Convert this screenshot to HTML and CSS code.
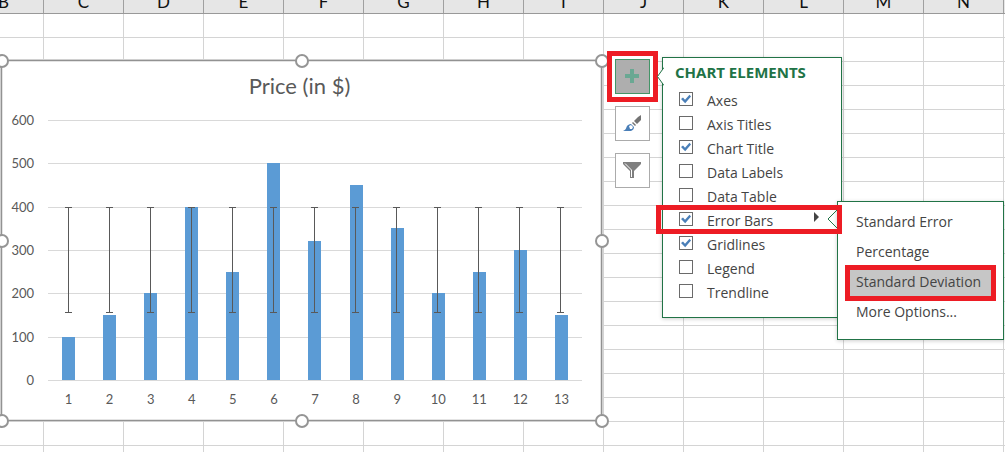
FILE: index.html
```html
<!DOCTYPE html>
<html lang="en">
<head>
<meta charset="utf-8">
<title>Price chart</title>
<link rel="stylesheet" href="styles.css">
</head>
<body>
<main class="sheet">
  <div class="columns">
    <span>B</span><span>C</span><span>D</span><span>E</span><span>F</span><span>G</span><span>H</span><span>I</span><span>J</span><span>K</span><span>L</span><span>M</span><span>N</span><span></span>
  </div>
  <div class="cells"></div>

  <section class="chart" aria-label="Price chart">
    <h1 class="chart-title">Price (in $)</h1>
    <div class="chart-body">
      <div class="y-axis"><span>600</span><span>500</span><span>400</span><span>300</span><span>200</span><span>100</span><span>0</span></div>
      <div class="plot">
        <div class="gridlines"><i></i><i></i><i></i><i></i><i></i><i></i><i></i></div>
        <div class="bars">
          <div class="slot"><div class="bar" style="height:16.67%"></div></div>
          <div class="slot"><div class="bar" style="height:25%"></div></div>
          <div class="slot"><div class="bar" style="height:33.33%"></div></div>
          <div class="slot"><div class="bar" style="height:66.67%"></div></div>
          <div class="slot"><div class="bar" style="height:41.67%"></div></div>
          <div class="slot"><div class="bar" style="height:83.33%"></div></div>
          <div class="slot"><div class="bar" style="height:53.33%"></div></div>
          <div class="slot"><div class="bar" style="height:75%"></div></div>
          <div class="slot"><div class="bar" style="height:58.33%"></div></div>
          <div class="slot"><div class="bar" style="height:33.33%"></div></div>
          <div class="slot"><div class="bar" style="height:41.67%"></div></div>
          <div class="slot"><div class="bar" style="height:50%"></div></div>
          <div class="slot"><div class="bar" style="height:25%"></div></div>
        </div>
      </div>
      <div class="x-axis"><span>1</span><span>2</span><span>3</span><span>4</span><span>5</span><span>6</span><span>7</span><span>8</span><span>9</span><span>10</span><span>11</span><span>12</span><span>13</span></div>
    </div>
    <i class="handle top left"></i><i class="handle top center"></i><i class="handle top right"></i>
    <i class="handle middle left"></i><i class="handle middle right"></i>
    <i class="handle bottom left"></i><i class="handle bottom center"></i><i class="handle bottom right"></i>
  </section>

  <div class="tools">
    <button class="tool active" type="button" aria-label="Chart elements">
      <svg width="19" height="19" viewBox="0 0 19 19"><path d="M7 2h4v5h5v4h-5v5H7v-5H2V7h5z" fill="#6aa893"/></svg>
    </button>
    <button class="tool" type="button" aria-label="Chart styles">
      <svg width="19" height="19" viewBox="0 0 19 19"><path d="M18 1v5l-4 4-3-3 4-4z" fill="#737373"/><path d="M10 8l3 3-1 1-3-3z" fill="#737373"/><path d="M0 17c3-1 3-3 4-5 1-1 2-2 4-2l3 3c0 2-1 3-3 4z" fill="#4a7fb8"/><path d="M6 12l2-1 2 2-1 2-2 0z" fill="#fff"/></svg>
    </button>
    <button class="tool" type="button" aria-label="Chart filters">
      <svg width="19" height="19" viewBox="0 0 19 19"><path d="M0 1h18v2l-7 7v7H7v-7L0 3z" fill="#7f7f7f"/><path d="M2 2.500L8.500 9v7" fill="none" stroke="#fff"/></svg>
    </button>
  </div>

  <section class="panel" aria-label="Chart elements">
    <svg class="notch" width="7" height="20" viewBox="0 0 7 20"><path d="M7 .5L.5 9.500 7 18.500" fill="#fff" stroke="#217346"/></svg>
    <h2>CHART ELEMENTS</h2>
    <label class="option"><input type="checkbox" checked><span>Axes</span></label>
    <label class="option"><input type="checkbox"><span>Axis Titles</span></label>
    <label class="option"><input type="checkbox" checked><span>Chart Title</span></label>
    <label class="option"><input type="checkbox"><span>Data Labels</span></label>
    <label class="option"><input type="checkbox"><span>Data Table</span></label>
    <label class="option marked"><input type="checkbox" checked><span>Error Bars</span>
      <svg class="more" width="24" height="20" viewBox="0 0 24 20"><path d="M1 3l5 5-5 5z" fill="#444"/><path d="M24 1l-9 9 9 9" fill="none" stroke="#217346"/></svg>
    </label>
    <label class="option"><input type="checkbox" checked><span>Gridlines</span></label>
    <label class="option"><input type="checkbox"><span>Legend</span></label>
    <label class="option"><input type="checkbox"><span>Trendline</span></label>
  </section>

  <nav class="submenu" aria-label="Error bars">
    <button type="button">Standard Error</button>
    <button type="button">Percentage</button>
    <button type="button" class="selected">Standard Deviation</button>
    <button type="button">More Options...</button>
  </nav>
</main>
</body>
</html>
```
FILE: styles.css
```css
*, *::before, *::after { box-sizing: border-box; }
body { margin: 0; background: #fff; font-family: "Open Sans", "Noto Sans", sans-serif; }
button { font: inherit; margin: 0; }

.sheet {
  position: relative;
  display: flex;
  flex-direction: column;
  min-height: 100vh;
  overflow: hidden;
}
.columns {
  display: flex;
  height: 24px;
  margin: -10px 0 0 -36px;
  background: #e6e6e6;
  border-bottom: 1px solid #999;
  font: 17px/24px Lato, sans-serif;
  color: #111;
}
.columns span {
  flex: none;
  width: 80px;
  text-align: center;
  border-right: 1px solid #a0a0a0;
}
.cells {
  flex: 1;
  background:
    repeating-linear-gradient(to right, transparent 0 79px, #d4d4d4 79px 80px) -36px 0 / 2400px 100%,
    repeating-linear-gradient(to bottom, transparent 0 23px, #d4d4d4 23px 24px);
}

/* Embedded chart object */
.chart {
  position: absolute;
  left: 1px;
  top: 60px;
  width: 601px;
  padding: 12px 19px 10px 9px;
  background: #fff;
  border: 1px solid #929292;
  box-shadow: 0 0 0 1px #d0d0d0, inset 0 0 0 1px #e4e4e4;
  font-family: Lato, sans-serif;
  color: #595959;
}
.chart-title {
  margin: 0 0 21px;
  font-size: 22px;
  line-height: 26px;
  font-weight: 400;
  text-align: center;
  text-indent: 6px;
}
.chart-body {
  display: grid;
  grid-template-columns: 23px 1fr;
  grid-template-rows: 261px auto;
  column-gap: 14px;
  font-size: 13px;
}
.y-axis {
  display: flex;
  flex-direction: column;
  justify-content: space-between;
  margin: -8px 0;
  text-align: right;
  line-height: 17px;
}
.plot { display: grid; }
.gridlines, .bars { grid-area: 1 / 1; }
.gridlines {
  display: flex;
  flex-direction: column;
  justify-content: space-between;
}
.gridlines i { height: 1px; background: #d9d9d9; }
.bars, .x-axis {
  display: grid;
  grid-template-columns: repeat(13, 1fr);
}
.bars { height: 260px; }
.slot {
  position: relative;
  display: flex;
  align-items: flex-end;
  justify-content: center;
}
.bar { width: 13px; background: #5b9bd5; }
/* Standard deviation whisker, drawn over every bar */
.slot::before, .slot::after { content: ""; position: absolute; top: 87px; height: 106px; }
.slot::before { left: calc(50% - 4px); width: 7px; border: solid #595959; border-width: 1px 0; }
.slot::after { left: 50%; width: 1px; margin-left: -1px; background: #595959; }
.x-axis {
  grid-column: 2;
  padding-top: 9px;
  padding-bottom: 1px;
  line-height: 19px;
  text-align: center;
}

.handle {
  position: absolute;
  width: 14px;
  height: 14px;
  border: 2px solid #959595;
  border-radius: 50%;
  background: #fff;
}
.top { top: -7px; }
.middle { top: calc(50% - 7px); }
.bottom { bottom: -8px; }
.left { left: -7px; }
.center { left: calc(50% - 7px); }
.right { right: -8px; }

.tools {
  position: absolute;
  left: 615px;
  top: 59px;
  display: flex;
  flex-direction: column;
  gap: 12px;
}
.tool {
  display: grid;
  place-items: center;
  width: 35px;
  height: 35px;
  padding: 0;
  background: #fff;
  border: 1px solid #ababab;
}
.tool.active {
  background: #aeaeae;
  border-color: #439467;
  outline: 5px solid #ed1c24;
  outline-offset: 3px;
  box-shadow: 0 0 0 3px #fff;
}

.panel, .submenu {
  position: absolute;
  background: #fff;
  border: 1px solid #217346;
  box-shadow: 0 1px 4px #0003;
  font-size: 14px;
  color: #444;
}
.panel { left: 662px; top: 57px; width: 180px; padding-bottom: 14px; }
.panel h2 {
  margin: 0;
  padding-left: 12px;
  font-size: 15px;
  line-height: 29px;
  color: #217346;
}
.notch { position: absolute; left: -6px; top: 9px; }
.option {
  position: relative;
  display: flex;
  align-items: center;
  height: 24px;
  padding-left: 16px;
  gap: 14px;
}
.option span { line-height: 24px; padding-top: 4px; }
.option input {
  appearance: none;
  display: grid;
  width: 14px;
  height: 14px;
  margin: 0;
  background: #fff;
  border: 1px solid #6a6a6a;
}
.option input:checked::before {
  content: "";
  margin: 1px;
  background: #4a7fb8;
  clip-path: polygon(0 50%, 20% 35%, 40% 58%, 85% 8%, 100% 25%, 42% 92%);
}
.more { margin-left: auto; margin-right: 4px; }
.marked { z-index: 3; }
.marked::after {
  content: "";
  position: absolute;
  inset: -2px -1px -3px -7px;
  border: 5px solid #ed1c24;
}

.submenu {
  z-index: 2;
  left: 837px;
  top: 201px;
  width: 167px;
  display: flex;
  flex-direction: column;
  gap: 4px;
  padding: 8px 12px 13px;
}
.submenu button {
  height: 26px;
  padding: 0 0 4px 6px;
  border: 0;
  background: none;
  color: inherit;
  text-align: left;
  white-space: nowrap;
}
.submenu .selected { background: #c6c6c6; outline: 5px solid #ed1c24; }
```
